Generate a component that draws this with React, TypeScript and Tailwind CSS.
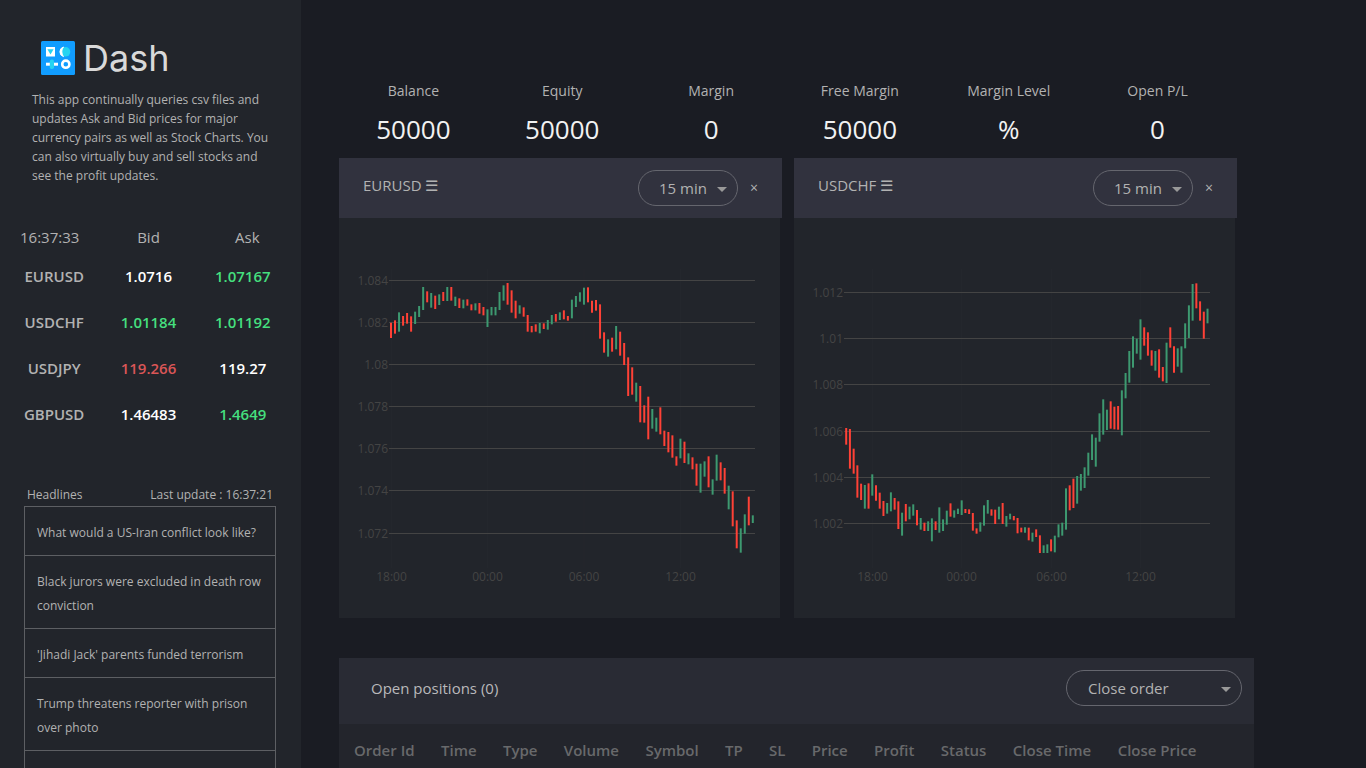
import { useState } from 'react';

type Bar = [high: number, low: number, up: 0 | 1];

type Axis = { label: string; at: number };

type ChartData = {
  pair: string;
  offset: number;
  start: number;
  step: number;
  bars: Bar[];
  prices: Axis[];
  times: Axis[];
};

// Bars are stored in thirds of a chart unit, measured from the chart's offset
const eurusd: ChartData = {
  pair: 'EURUSD',
  offset: 42,
  start: 52,
  step: 4.02,
  bars: [
    [188, 234, 0], [181, 221, 0], [157, 215, 1], [168, 197, 0], [159, 191, 0], [169, 215, 0],
    [155, 192, 1], [138, 171, 1], [81, 150, 1], [94, 127, 0], [99, 143, 1], [107, 147, 0],
    [103, 135, 1], [96, 123, 0], [81, 123, 1], [81, 122, 0], [110, 138, 1], [115, 144, 0],
    [119, 145, 1], [118, 137, 0], [133, 151, 0], [130, 151, 1], [129, 161, 0], [141, 166, 0],
    [148, 201, 1], [141, 166, 1], [141, 166, 1], [96, 150, 1], [76, 122, 1], [69, 134, 0],
    [91, 158, 0], [122, 175, 0], [136, 161, 1], [142, 170, 0], [165, 215, 0], [198, 217, 0],
    [193, 215, 0], [189, 220, 1], [190, 207, 0], [180, 209, 1], [165, 193, 1], [162, 185, 0],
    [157, 180, 1], [151, 178, 0], [168, 182, 0], [119, 175, 1], [108, 141, 1], [97, 125, 1],
    [83, 134, 1], [82, 127, 0], [122, 158, 0], [120, 152, 0], [133, 236, 0], [217, 278, 0],
    [238, 290, 1], [233, 275, 0], [198, 268, 1], [215, 287, 0], [249, 315, 0], [292, 408, 0],
    [322, 404, 0], [368, 425, 1], [378, 487, 0], [436, 488, 0], [410, 538, 0], [447, 506, 1],
    [473, 515, 1], [442, 523, 0], [512, 558, 0], [516, 577, 0], [526, 593, 0], [589, 617, 0],
    [536, 595, 1], [545, 609, 0], [580, 613, 1], [592, 628, 0], [611, 677, 0], [611, 698, 1],
    [604, 650, 1], [589, 682, 0], [658, 704, 1], [584, 662, 1], [607, 661, 0], [624, 701, 0],
    [677, 748, 1], [694, 799, 0], [781, 865, 0], [805, 878, 1], [763, 821, 1], [710, 796, 0],
    [766, 789, 1],
  ],
  prices: [
    { label: '1.084', at: 62.5 },
    { label: '1.082', at: 104.5 },
    { label: '1.08', at: 146.5 },
    { label: '1.078', at: 188.5 },
    { label: '1.076', at: 230.5 },
    { label: '1.074', at: 272.5 },
    { label: '1.072', at: 315.5 },
  ],
  times: [
    { label: '18:00', at: 52.5 },
    { label: '00:00', at: 148.5 },
    { label: '06:00', at: 245 },
    { label: '12:00', at: 341.5 },
  ],
};

const usdchf: ChartData = {
  pair: 'USDCHF',
  offset: 52,
  start: 52.2,
  step: 3.725,
  bars: [
    [474, 524, 0], [477, 596, 0], [536, 611, 0], [586, 683, 0], [641, 690, 0], [645, 716, 1],
    [640, 716, 0], [613, 677, 1], [646, 692, 0], [668, 716, 0], [693, 738, 0], [699, 731, 1],
    [667, 724, 1], [684, 719, 0], [694, 777, 0], [728, 797, 1], [702, 754, 0], [710, 748, 1],
    [703, 737, 1], [720, 766, 0], [744, 779, 1], [758, 783, 0], [754, 783, 1], [745, 814, 1],
    [754, 780, 0], [712, 788, 1], [748, 783, 1], [722, 764, 1], [700, 740, 0], [721, 743, 1],
    [716, 732, 1], [691, 735, 1], [717, 729, 0], [718, 732, 0], [729, 782, 0], [775, 791, 0],
    [757, 785, 1], [706, 767, 1], [690, 731, 1], [718, 737, 0], [719, 762, 0], [710, 748, 1],
    [699, 762, 0], [738, 770, 1], [731, 748, 1], [738, 751, 0], [744, 790, 0], [773, 787, 0],
    [772, 788, 1], [773, 811, 0], [788, 815, 1], [778, 801, 0], [796, 849, 0], [826, 849, 1],
    [823, 849, 1], [808, 844, 0], [797, 847, 1], [763, 802, 1], [758, 797, 1], [655, 779, 1],
    [646, 721, 0], [626, 714, 0], [618, 701, 1], [612, 662, 1], [592, 654, 1], [548, 617, 1],
    [493, 570, 1], [503, 590, 1], [430, 515, 1], [388, 494, 1], [419, 480, 1], [394, 476, 0],
    [410, 478, 0], [408, 479, 0], [361, 496, 1], [309, 385, 1], [243, 338, 1], [199, 293, 1],
    [206, 251, 1], [148, 269, 1], [172, 227, 0], [187, 257, 0], [241, 287, 0], [243, 302, 1],
    [238, 323, 0], [291, 334, 0], [218, 339, 1], [172, 233, 0], [229, 308, 0], [235, 290, 1],
    [229, 308, 1], [160, 235, 1], [106, 204, 1], [42, 152, 1], [40, 115, 0], [94, 152, 0],
    [125, 206, 0], [116, 160, 1],
  ],
  prices: [
    { label: '1.012', at: 74.5 },
    { label: '1.01', at: 120.5 },
    { label: '1.008', at: 166.5 },
    { label: '1.006', at: 213.5 },
    { label: '1.004', at: 259.5 },
    { label: '1.002', at: 305.5 },
  ],
  times: [
    { label: '18:00', at: 78.5 },
    { label: '00:00', at: 167.5 },
    { label: '06:00', at: 257.5 },
    { label: '12:00', at: 346.5 },
  ],
};

const rates = [
  { pair: 'EURUSD', bid: '1.0716', ask: '1.07167', bidColor: 'text-white', askColor: 'text-[#45df7e]' },
  { pair: 'USDCHF', bid: '1.01184', ask: '1.01192', bidColor: 'text-[#45df7e]', askColor: 'text-[#45df7e]' },
  { pair: 'USDJPY', bid: '119.266', ask: '119.27', bidColor: 'text-[#da5657]', askColor: 'text-white' },
  { pair: 'GBPUSD', bid: '1.46483', ask: '1.4649', bidColor: 'text-white', askColor: 'text-[#45df7e]' },
];

const headlines = [
  'What would a US-Iran conflict look like?',
  'Black jurors were excluded in death row conviction',
  "'Jihadi Jack' parents funded terrorism",
  'Trump threatens reporter with prison over photo',
];

const stats = [
  { label: 'Balance', value: '50000' },
  { label: 'Equity', value: '50000' },
  { label: 'Margin', value: '0' },
  { label: 'Free Margin', value: '50000' },
  { label: 'Margin Level', value: '%' },
  { label: 'Open P/L', value: '0' },
];

const orderColumns = [
  'Order Id', 'Time', 'Type', 'Volume', 'Symbol', 'TP', 'SL', 'Price', 'Profit', 'Status', 'Close Time', 'Close Price',
];

function Logo() {
  return (
    <div className="flex items-center gap-2 pl-[9px]">
      <svg width="34" height="34" viewBox="0 0 34 34" aria-hidden="true">
        <rect width="34" height="34" rx="1.5" fill="#119dff" />
        <rect x="5" y="6" width="9" height="9.5" fill="#fff" />
        <path d="M6.4 8.3h6.2l-3.1 5.2z" fill="#25d4f1" />
        <circle cx="24.5" cy="10.8" r="4.8" fill="#25d4f1" />
        <path d="M22.5 6a5 5 0 0 0 0 9.6c-2.2-3-2.2-6.6 0-9.6z" fill="#fff" stroke="#fff" strokeWidth="1" />
        <path d="M5 23.2h12" stroke="#fff" strokeWidth="3" />
        <rect x="8.8" y="18.6" width="4.2" height="9.4" rx="1.8" fill="#25d4f1" />
        <circle cx="24.8" cy="23.2" r="3.6" fill="none" stroke="#fff" strokeWidth="2.6" />
      </svg>
      <span className="font-[Inter,sans-serif] text-[36px] leading-[34px] text-[#d9d9d9]">Dash</span>
    </div>
  );
}

function Caret() {
  return (
    <svg className="pointer-events-none absolute right-[11px] top-[17px]" width="10" height="5" viewBox="0 0 10 5" aria-hidden="true">
      <path d="M0 0h10L5 5z" fill="#999" />
    </svg>
  );
}

function Chart({ data }: { data: ChartData }) {
  return (
    <svg className="block h-[400px] w-full" viewBox="0 0 441 400" role="img" aria-label={`${data.pair} price chart`}>
      {data.times.map((t) => (
        <line key={t.label} x1={t.at} x2={t.at} y1="51" y2="350" stroke="#24272d" />
      ))}
      {data.prices.map((p) => (
        <line key={p.label} x1="50" x2="416" y1={p.at} y2={p.at} stroke="#444444" />
      ))}
      {data.bars.map(([high, low, up], i) => (
        <line
          key={i}
          x1={data.start + i * data.step}
          x2={data.start + i * data.step}
          y1={data.offset + high / 3}
          y2={data.offset + low / 3}
          stroke={up ? '#3d9970' : '#ff4136'}
          strokeWidth="2"
        />
      ))}
      {data.prices.map((p) => (
        <text key={p.label} x="49" y={p.at + 4} textAnchor="end" fontSize="12" fill="#444444">
          {p.label}
        </text>
      ))}
      {data.times.map((t) => (
        <text key={t.label} x={t.at} y="363" textAnchor="middle" fontSize="12" fill="#444444">
          {t.label}
        </text>
      ))}
    </svg>
  );
}

function ChartPanel({ data }: { data: ChartData }) {
  const [period, setPeriod] = useState('15 min');

  return (
    <section className="min-w-0 flex-1">
      <header className="flex h-[60px] items-center justify-between bg-[#31323e] pl-6 pr-5">
        <button type="button" className="pb-1.5 text-[15px] leading-5">
          {data.pair} ☰
        </button>
        <div className="flex items-center gap-2">
          <div className="relative">
            <select
              aria-label={`${data.pair} period`}
              value={period}
              onChange={(e) => setPeriod(e.target.value)}
              className="block h-9 w-[100px] appearance-none rounded-full border border-[#65666e] bg-transparent pl-5 text-[15px] outline-none"
            >
              <option>5 min</option>
              <option>15 min</option>
              <option>30 min</option>
            </select>
            <Caret />
          </div>
          <button type="button" aria-label={`Close ${data.pair}`} className="w-4 text-center text-sm">
            ×
          </button>
        </div>
      </header>
      <div className="mr-[2px] bg-[#22252b]">
        <Chart data={data} />
      </div>
    </section>
  );
}

function Sidebar() {
  return (
    <aside className="w-[301px] shrink-0 bg-[#22252b]">
      <div className="px-8 pt-[41px]">
        <Logo />
        <p className="mt-[15px] text-xs leading-[19px]">
          This app continually queries csv files and updates Ask and Bid prices for major currency
          pairs as well as Stock Charts. You can also virtually buy and sell stocks and see the
          profit updates.
        </p>
      </div>

      <table className="mx-[7px] mt-[37px] w-[283px] table-fixed text-center text-[15px]">
        <thead>
          <tr className="h-[31px]">
            <th className="pr-[9px] font-normal">16:37:33</th>
            <th className="font-normal">Bid</th>
            <th className="pl-[9px] font-normal">Ask</th>
          </tr>
        </thead>
        <tbody className="font-semibold">
          {rates.map((r) => (
            <tr key={r.pair} className="h-[46px]">
              <td>{r.pair}</td>
              <td className={r.bidColor}>{r.bid}</td>
              <td className={r.askColor}>{r.ask}</td>
            </tr>
          ))}
        </tbody>
      </table>

      <div className="mt-12 flex justify-between pl-[27px] pr-7 text-xs leading-5">
        <h2>Headlines</h2>
        <p>Last update : 16:37:21</p>
      </div>
      <ul className="ml-6 mr-[25px] mt-px border border-b-0 border-[#5d5f63] text-xs leading-6">
        {headlines.map((text) => (
          <li key={text} className="border-b border-[#5d5f63] px-3 pb-2.5 pt-3.5">
            <a href="#news">{text}</a>
          </li>
        ))}
        <li className="h-12" />
      </ul>
    </aside>
  );
}

function OpenPositions() {
  return (
    <section className="mt-10 flex-1 bg-[#23252c]">
      <header className="flex h-[66px] items-start justify-between bg-[#292b34] pl-8 pr-3 pt-3">
        <h2 className="text-[15px] leading-9 text-[#b9b9bb]">Open positions (0)</h2>
        <div className="relative">
          <select
            aria-label="Close order"
            className="block h-9 w-[176px] appearance-none rounded-full border border-[#65666e] bg-transparent pl-[21px] text-[15px] outline-none"
          >
            <option>Close order</option>
          </select>
          <Caret />
        </div>
      </header>
      <table className="ml-[2px] w-[869px] text-[15px] text-[#68696b]">
        <thead>
          <tr className="h-[52px]">
            {orderColumns.map((column) => (
              <th key={column} className="whitespace-nowrap px-[13px] text-left font-semibold">
                {column}
              </th>
            ))}
          </tr>
        </thead>
      </table>
    </section>
  );
}

export default function App() {
  return (
    <div className="flex h-screen overflow-hidden bg-[#1a1c23] font-['Open_Sans',sans-serif] text-[#b2b2b2]">
      <Sidebar />
      <main className="flex min-w-0 flex-1 flex-col pl-[38px] pr-28 pt-20">
        <dl className="flex pr-[22px] text-center">
          {stats.map((s) => (
            <div key={s.label} className="flex-1">
              <dt className="text-sm leading-[22px]">{s.label}</dt>
              <dd className="mt-2 pb-2.5 text-[26px] leading-[38px] text-[#f2f2f2]">{s.value}</dd>
            </div>
          ))}
        </dl>
        <div className="flex gap-3 pr-[17px]">
          <ChartPanel data={eurusd} />
          <ChartPanel data={usdchf} />
        </div>
        <OpenPositions />
      </main>
    </div>
  );
}
